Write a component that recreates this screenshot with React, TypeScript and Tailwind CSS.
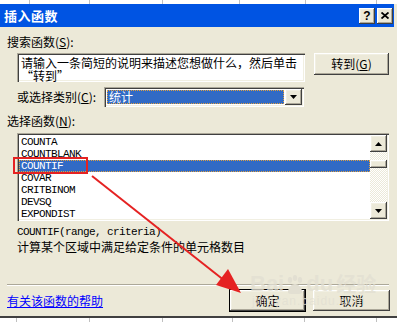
import React from "react";

const cjk = "font-['SimSun','Noto_Sans_CJK_SC',sans-serif]";
const mono = "font-['Liberation_Mono','Noto_Sans_CJK_SC',monospace]";

const raised =
  "bg-[#ece9d8] shadow-[inset_-1px_-1px_0_#404040,inset_1px_1px_0_#ffffff,inset_-2px_-2px_0_#aca899,inset_2px_2px_0_#f1efe2]";
const sunken =
  "bg-white shadow-[inset_1px_1px_0_#aca899,inset_2px_2px_0_#404040,inset_-1px_-1px_0_#ffffff,inset_-2px_-2px_0_#f1efe2]";

const functions = ["COUNTA", "COUNTBLANK", "COUNTIF", "COVAR", "CRITBINOM", "DEVSQ", "EXPONDIST"];

const Arrow = ({ down }: { down?: boolean }) => (
  <svg width="7" height="4" viewBox="0 0 7 4">
    <path d={down ? "M0 0h7L3.5 4z" : "M0 4h7L3.5 0z"} fill="#000" />
  </svg>
);

const Key = ({ k }: { k: string }) => (
  <span>
    (<span className="underline">{k}</span>)
  </span>
);

const SheetStrip = ({ lines, h }: { lines: number[]; h: string }) => (
  <div className={`flex ${h} bg-white`}>
    {lines.map((w, i) => (
      <div key={i} style={{ width: w }} className="h-full shrink-0 border-r border-[#c0c0c0]" />
    ))}
  </div>
);

export default function App() {
  return (
    <div className={`relative w-[397px] h-[322px] overflow-hidden bg-white text-[12px] leading-[12px] text-black ${cjk}`}>
      <SheetStrip h="h-[4px]" lines={[30, 60, 73, 77, 66, 71]} />

      <div className="flex flex-col h-[314px] bg-[#ece9d8] border-b-2 border-[#404040]">
        {/* title bar */}
        <div className="flex items-center justify-between h-[23px] mr-[3px] bg-[#0054e3]">
          <span className="pl-[4px] text-[13px] font-bold text-white tracking-[0.5px]">插入函数</span>
          <div className="flex gap-[2px] pr-[1px]">
            <div className={`flex items-center justify-center w-[16px] h-[16px] ${raised} text-[12px] font-bold font-['Liberation_Sans',sans-serif]`}>
              ?
            </div>
            <div className={`flex items-center justify-center w-[16px] h-[16px] ${raised}`}>
              <svg width="8" height="7" viewBox="0 0 8 7">
                <path d="M0.5 0.5l7 6M7.5 0.5l-7 6" stroke="#000" strokeWidth="1.8" />
              </svg>
            </div>
          </div>
        </div>

        {/* search */}
        <div className="mt-[9px] pl-[7px]">
          搜索函数<Key k="S" />:
        </div>
        <div className="flex mt-[5px] ml-[17px] items-start">
          <div className={`w-[288px] h-[29px] ${sunken} pl-[4px] pt-[3px] leading-[13px]`}>
            请输入一条简短的说明来描述您想做什么，然后单击
            <br />
            “转到”
          </div>
          <div className={`ml-[9px] w-[75px] h-[22px] ${raised} flex items-center justify-center`}>
            转到<Key k="G" />
          </div>
        </div>

        {/* category */}
        <div className="flex items-center mt-[5px] ml-[17px]">
          <div className="w-[87px]">
            或选择类别<Key k="C" />:
          </div>
          <div className={`flex w-[200px] h-[20px] ${sunken} p-[2px]`}>
            <div className="flex-1 m-[1px] bg-[#316ac5] text-white border border-dotted border-[#e0a040] pl-[1px] flex items-center">
              统计
            </div>
            <div className={`w-[17px] ${raised} flex items-center justify-center`}>
              <Arrow down />
            </div>
          </div>
        </div>

        {/* function list */}
        <div className="mt-[8px] pl-[7px]">
          选择函数<Key k="N" />:
        </div>
        <div className={`flex mt-[6px] ml-[17px] w-[372px] h-[88px] ${sunken} p-[2px]`}>
          <div className={`flex-1 flex flex-col pt-[1px] ${mono} text-[11px] tracking-[-0.6px]`}>
            {functions.map((f) => (
              <div
                key={f}
                className={`h-[12px] leading-[12px] pl-[2px] ${
                  f === "COUNTIF"
                    ? "bg-[#316ac5] text-white outline outline-1 outline-dotted outline-[#e0a040] -outline-offset-1"
                    : ""
                }`}
              >
                {f}
              </div>
            ))}
          </div>
          <div className="w-[17px] flex flex-col bg-[repeating-conic-gradient(#ffffff_0%_25%,#ece9d8_0%_50%)] bg-[length:2px_2px]">
            <div className={`h-[17px] ${raised} flex items-center justify-center`}>
              <Arrow />
            </div>
            <div className={`mt-[8px] h-[8px] ${raised}`} />
            <div className="flex-1" />
            <div className={`h-[17px] ${raised} flex items-center justify-center`}>
              <Arrow down />
            </div>
          </div>
        </div>

        {/* description */}
        <div className={`mt-[6px] ml-[17px] ${mono} text-[11px] tracking-[-0.6px] leading-[11px]`}>
          COUNTIF(range, criteria)
        </div>
        <div className="mt-[3px] ml-[17px]">计算某个区域中满足给定条件的单元格数目</div>

        <div className="mt-[31px] ml-[7px] mr-[8px] h-[2px] border-t border-b border-t-[#aca899] border-b-white" />

        {/* bottom row */}
        <div className="flex items-center mt-[4px] ml-[7px]">
          <span className="text-[#0000ff] underline w-[223px]">有关该函数的帮助</span>
          <div className="w-[75px] h-[21px] outline outline-1 outline-black">
            <div className={`w-full h-full ${raised} flex items-center justify-center`}>确定</div>
          </div>
          <div className={`ml-[8px] w-[77px] h-[21px] ${raised} flex items-center justify-center`}>取消</div>
        </div>
      </div>

      <SheetStrip h="h-[6px]" lines={[17, 73, 73, 70, 72, 72]} />

      {/* watermark */}
      <div className="absolute left-[250px] top-[273px] flex flex-col items-start text-[#e2dfd2]/80 pointer-events-none font-['Liberation_Sans',sans-serif]">
        <div className="flex items-end text-[22px] leading-[22px] font-bold">
          Bai
          <svg width="20" height="20" viewBox="0 0 20 20" className="mx-[1px]">
            <g fill="#e2dfd2">
              <ellipse cx="5" cy="5" rx="2.2" ry="3" />
              <ellipse cx="10" cy="3" rx="2.2" ry="3" />
              <ellipse cx="15" cy="5" rx="2.2" ry="3" />
              <path d="M3 17c0-5 4-8 7-8s7 3 7 8c0 2-3 2-7 2s-7 0-7-2z" />
            </g>
          </svg>
          du
          <span className={`ml-[3px] text-[20px] ${cjk}`}>经验</span>
        </div>
        <div className="text-[12px] leading-[12px] tracking-[1px] ml-[2px]">jingyan.baidu.com</div>
      </div>

      {/* annotations */}
      <svg className="absolute inset-0 pointer-events-none" width="397" height="322">
        <rect x="14" y="158" width="73" height="15" fill="none" stroke="#e52222" strokeWidth="2" />
        <line x1="92" y1="176" x2="225" y2="281" stroke="#e52222" strokeWidth="2" />
        <path d="M241 293 L216 285 L228 269 Z" fill="#e52222" />
      </svg>
    </div>
  );
}
